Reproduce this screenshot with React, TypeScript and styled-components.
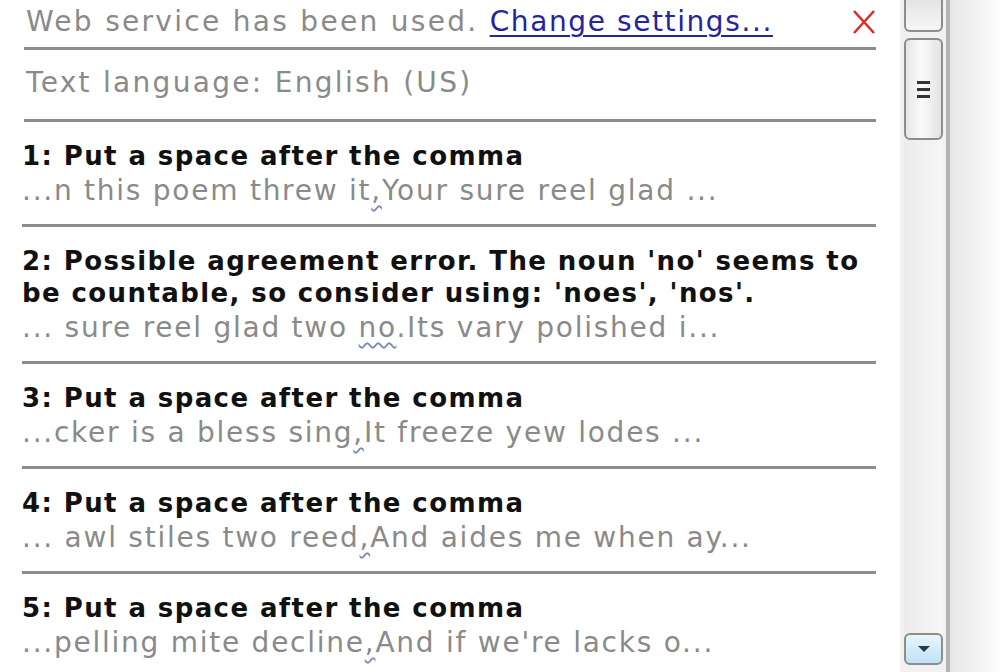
import React from 'react';
import styled, { createGlobalStyle } from 'styled-components';

const GlobalStyle = createGlobalStyle`
  html, body {
    margin: 0;
    padding: 0;
    background: #fff;
    overflow: hidden;
  }
  #root {
    width: 1000px;
    height: 672px;
  }
`;

const Window = styled.div`
  display: flex;
  width: 1000px;
  height: 672px;
  background: #fff;
  font-family: 'DejaVu Sans', Verdana, sans-serif;
`;

const Panel = styled.div`
  width: 900px;
  box-sizing: border-box;
  padding: 0 24px 0 24px;
  display: flex;
  flex-direction: column;
  overflow: hidden;
`;

const Row = styled.div<{ $h?: number }>`
  border-bottom: 3px solid #8c8c8c;
  box-sizing: border-box;
  flex-shrink: 0;
  ${(p) => (p.$h ? `height: ${p.$h}px;` : '')}
`;

const InfoRow = styled(Row)`
  display: flex;
  align-items: center;
  justify-content: space-between;
  padding: 0 0 4px 2px;
`;

const InfoText = styled.span`
  font-size: 28px;
  color: #8a8a8a;
  letter-spacing: 2.3px;
  white-space: nowrap;
`;

const Link = styled.a`
  color: #25259a;
  letter-spacing: 1.6px;
  text-decoration: underline;
  text-decoration-thickness: 2px;
  text-underline-offset: 4px;
  cursor: pointer;
`;

const CloseButton = styled.button`
  border: 0;
  background: none;
  padding: 0;
  width: 24px;
  height: 26px;
  display: flex;
  cursor: pointer;
`;

const Item = styled(Row)`
  padding: 18px 0 15px 0;
  margin-left: -2px;
`;

const Title = styled.div`
  font-size: 26px;
  font-weight: bold;
  color: #111;
  line-height: 32px;
  letter-spacing: 1.4px;
`;

const Snippet = styled.div`
  font-size: 28px;
  color: #8a8a8a;
  line-height: 37px;
  white-space: nowrap;
  letter-spacing: 1.75px;
`;

const Mark = styled.span`
  text-decoration: underline wavy #7d8db8;
  text-decoration-thickness: 1.5px;
  text-underline-offset: 5px;
`;

const ScrollBar = styled.div`
  width: 50px;
  display: flex;
  flex-direction: column;
  background: #f1f1f1;
  border-right: 4px solid #b4b4b4;
  box-sizing: border-box;
  padding: 0 3px 7px 4px;
`;

const ArrowButton = styled.div<{ $top?: boolean }>`
  height: 32px;
  flex-shrink: 0;
  box-sizing: border-box;
  border: 2px solid #8d8d8d;
  border-radius: ${(p) => (p.$top ? '0 0 6px 6px' : '6px')};
  ${(p) => (p.$top ? 'border-top: 0;' : '')}
  background: ${(p) =>
    p.$top
      ? 'linear-gradient(#e4e4e4, #f6f6f6)'
      : 'linear-gradient(#e9f5fc, #bfe2f6)'};
  display: flex;
  align-items: center;
  justify-content: center;
`;

const Thumb = styled.div`
  margin-top: 6px;
  height: 102px;
  box-sizing: border-box;
  border: 2px solid #8d8d8d;
  border-radius: 6px;
  background: linear-gradient(90deg, #e6e6e6, #fafafa 45%, #e3e3e3);
  display: flex;
  flex-direction: column;
  align-items: center;
  justify-content: center;
  gap: 4px;
`;

const Grip = styled.span`
  width: 13px;
  height: 3px;
  background: #333;
`;

const Track = styled.div`
  flex: 1;
  background: linear-gradient(90deg, #ececec, #f6f6f6);
`;

const Gutter = styled.div`
  flex: 1;
  background: linear-gradient(90deg, #e8e8e8, #f3f3f3 60%, #fdfdfd);
`;

type Issue = {
  title: string;
  before: string;
  mark: string;
  after: string;
};

const issues: Issue[] = [
  { title: '1: Put a space after the comma', before: '...n this poem threw it', mark: ',', after: 'Your sure reel glad ...' },
  {
    title: "2: Possible agreement error. The noun 'no' seems to be countable, so consider using: 'noes', 'nos'.",
    before: '... sure reel glad two ',
    mark: 'no',
    after: '.Its vary polished i...',
  },
  { title: '3: Put a space after the comma', before: '...cker is a bless sing', mark: ',', after: 'It freeze yew lodes ...' },
  { title: '4: Put a space after the comma', before: '... awl stiles two reed', mark: ',', after: 'And aides me when ay...' },
  { title: '5: Put a space after the comma', before: '...pelling mite decline', mark: ',', after: "And if we're lacks o..." },
];

export default function App() {
  return (
    <Window>
      <GlobalStyle />
      <Panel>
        <InfoRow $h={50}>
          <InfoText>
            Web service has been used. <Link>Change settings...</Link>
          </InfoText>
          <CloseButton aria-label="close">
            <svg width="24" height="26" viewBox="0 0 24 26">
              <path d="M2 2 L22 24 M22 2 L2 24" stroke="#e22a2a" strokeWidth="2.6" fill="none" />
            </svg>
          </CloseButton>
        </InfoRow>
        <InfoRow $h={72}>
          <InfoText>Text language: English (US)</InfoText>
        </InfoRow>
        {issues.map((it) => (
          <Item key={it.title}>
            <Title>{it.title}</Title>
            <Snippet>
              {it.before}
              <Mark>{it.mark}</Mark>
              {it.after}
            </Snippet>
          </Item>
        ))}
      </Panel>
      <ScrollBar>
        <ArrowButton $top />
        <Thumb>
          <Grip />
          <Grip />
          <Grip />
        </Thumb>
        <Track />
        <ArrowButton>
          <svg width="14" height="8" viewBox="0 0 14 8">
            <path d="M1 1 H13 L7 7 Z" fill="#2b3a4a" />
          </svg>
        </ArrowButton>
      </ScrollBar>
      <Gutter />
    </Window>
  );
}
